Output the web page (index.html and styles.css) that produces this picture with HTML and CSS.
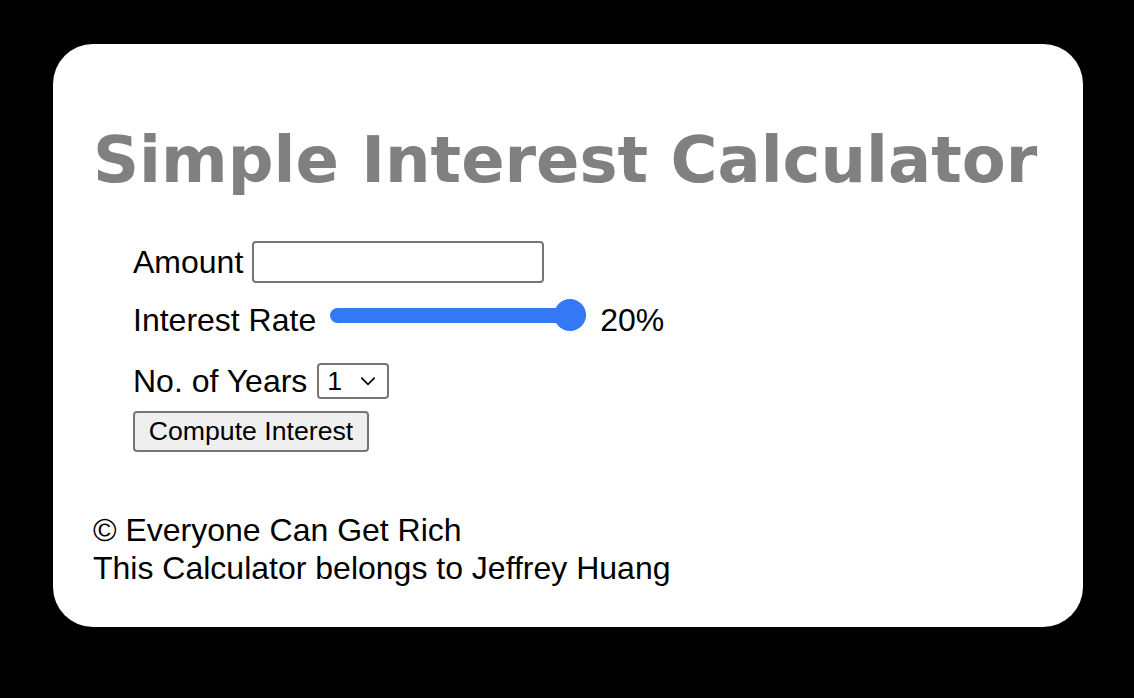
FILE: index.html
```html
<!DOCTYPE html>
<html>
<head>
<meta charset="utf-8">
<link rel="stylesheet" href="styles.css">
</head>
<body>
<div class="card">
  <h1 class="title">Simple Interest Calculator</h1>
  <form class="form">
    <div class="row row-amount">
      <label class="label" for="amount">Amount</label>
      <input class="amount" id="amount" type="number">
    </div>
    <div class="row row-rate">
      <label class="label low" for="rate">Interest Rate</label>
      <input class="rate" id="rate" type="range" min="1" max="20" value="20">
      <span class="rate-val low">20%</span>
    </div>
    <div class="row row-years">
      <label class="label" for="years">No. of Years</label>
      <select class="years" id="years"><option>1</option><option>2</option></select>
    </div>
    <div class="row row-btn">
      <button class="compute" type="button">Compute Interest</button>
    </div>
  </form>
  <div class="footer">
    <div>&copy; Everyone Can Get Rich</div>
    <div>This Calculator belongs to Jeffrey Huang</div>
  </div>
</div>
</body>
</html>
```

FILE: styles.css
```css
html, body {
  margin: 0;
  padding: 0;
  background: #000;
}
body {
  font-family: "Liberation Sans", Arial, sans-serif;
  font-size: 32px;
  color: #000;
}
.card {
  box-sizing: border-box;
  margin: 44px 0 0 53px;
  width: 1030px;
  height: 583px;
  background: #fff;
  border-radius: 40px;
  padding: 0 40px;
  overflow: hidden;
}
.title {
  font-family: "DejaVu Sans", Verdana, sans-serif;
  font-weight: bold;
  font-size: 64px;
  color: #808080;
  margin: 0;
  padding-top: 76px;
  line-height: 80px;
  white-space: nowrap;
}
.form {
  padding-left: 40px;
  margin-top: 41px;
}
.row {
  display: flex;
  align-items: center;
}
.label {
  line-height: 37px;
}
.low {
  padding-top: 10px;
  line-height: 37px;
}
.row-amount {
  height: 42px;
}
.amount {
  box-sizing: border-box;
  width: 292px;
  height: 42px;
  margin-left: 9px;
  border: 2px solid #767676;
  border-radius: 4px;
  font-size: 26px;
  padding: 2px 4px;
  -moz-appearance: textfield;
  appearance: textfield;
}
.amount::-webkit-inner-spin-button,
.amount::-webkit-outer-spin-button {
  -webkit-appearance: none;
  margin: 0;
}
.row-rate {
  margin-top: 12px;
  height: 40px;
}
.rate {
  -webkit-appearance: none;
  appearance: none;
  width: 256px;
  height: 30px;
  margin: 0 0 0 14px;
  background: transparent;
}
.rate::-webkit-slider-runnable-track {
  height: 15px;
  background: #3478f6;
  border-radius: 8px;
}
.rate::-webkit-slider-thumb {
  -webkit-appearance: none;
  width: 32px;
  height: 32px;
  border-radius: 50%;
  background: #3478f6;
  margin-top: -8.5px;
}
.rate-val {
  margin-left: 14px;
}
.row-years {
  margin-top: 28px;
  height: 36px;
}
.years {
  box-sizing: border-box;
  -webkit-appearance: none;
  appearance: none;
  width: 72px;
  height: 36px;
  margin-left: 10px;
  border: 2px solid #767676;
  border-radius: 4px;
  background: #fff url("data:image/svg+xml,%3Csvg xmlns='http://www.w3.org/2000/svg' width='20' height='12' viewBox='0 0 20 12'%3E%3Cpath d='M2 2 L10 10 L18 2' fill='none' stroke='%23000' stroke-width='2'/%3E%3C/svg%3E") no-repeat right 10px center / 18px 10px;
  font-family: "Liberation Sans", Arial, sans-serif;
  font-size: 26.67px;
  padding: 0 0 0 8px;
  color: #000;
}
.row-btn {
  margin-top: 12px;
}
.compute {
  box-sizing: border-box;
  width: 236px;
  height: 41px;
  border: 2px solid #767676;
  border-radius: 4px;
  background: #efefef;
  font-family: "Liberation Sans", Arial, sans-serif;
  font-size: 26.67px;
  color: #000;
  padding: 0;
}
.footer {
  margin-top: 59px;
  line-height: 38px;
}
```
